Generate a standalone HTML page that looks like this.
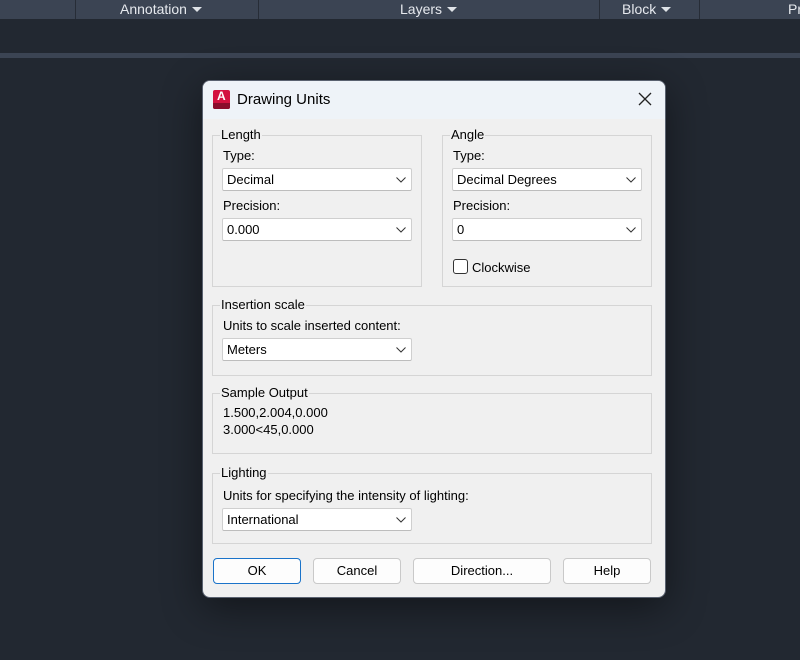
<!DOCTYPE html>
<html><head><style>
*{margin:0;padding:0;box-sizing:border-box}
body{width:800px;height:660px;background:#222831;position:relative;overflow:hidden;font-family:"Liberation Sans",sans-serif;}
.tb{position:absolute;left:0;top:0;width:800px;height:19px;background:#3b4453;}
.sep{position:absolute;top:0;width:1px;height:19px;background:#272d37}
.tt{position:absolute;top:1px;color:#e6e9ee;font-size:14px;}
.tri{display:inline-block;width:0;height:0;border-left:5px solid transparent;border-right:5px solid transparent;border-top:5px solid #dfe3e8;vertical-align:middle;margin-left:5px;margin-top:-2px}
.line{position:absolute;left:0;top:53px;width:800px;height:5px;background:#3b4453}
.dlg{position:absolute;left:202px;top:80px;width:464px;height:518px;background:#f0f0f0;border-radius:8px;border:1px solid #5a6270;overflow:hidden;box-shadow:0 10px 40px rgba(0,0,0,.45)}
.title{position:absolute;left:0;top:0;width:100%;height:38px;background:#eef3f8}
.a{position:absolute;}
.t{position:absolute;font-size:13px;color:#000;white-space:nowrap;line-height:16px}
.g{position:absolute;border:1px solid #d5d5d5}
.lg{position:absolute;background:#f0f0f0;padding:0 1px;font-size:13px;line-height:16px;top:-9px;left:7px}
.cb{position:absolute;width:190px;height:23px;background:#fff;border:1px solid #cfcfcf;border-bottom-color:#bdbdbd;border-radius:2px;font-size:13px;line-height:21px;padding-left:4px}
.cb svg{position:absolute;right:5px;top:8px}
.btn{position:absolute;top:477px;height:26px;background:#fdfdfd;border:1px solid #c9c9c9;border-radius:4px;font-size:13px;line-height:24px;text-align:center}
</style></head><body>
<div class="tb">
<div class="sep" style="left:75px"></div><div class="sep" style="left:258px"></div><div class="sep" style="left:599px"></div><div class="sep" style="left:699px"></div>
<div class="tt" style="left:120px">Annotation<span class="tri"></span></div>
<div class="tt" style="left:400px">Layers<span class="tri"></span></div>
<div class="tt" style="left:622px">Block<span class="tri"></span></div>
<div class="tt" style="left:788px">Pr</div>
</div>
<div class="line"></div>
<div class="dlg">
<div class="title">
<div class="a" style="left:10px;top:9px;width:17px;height:19px;background:#d3113f;border-radius:2px;"><div style="position:absolute;left:0;bottom:0;width:17px;height:6px;background:#8a0c2b;border-radius:0 0 2px 2px"></div><span style="position:absolute;left:4px;top:-1px;color:#fff;font-weight:bold;font-size:12px">A</span></div>
<div class="t" style="left:34px;top:10px;font-size:15px;line-height:18px">Drawing Units</div>
<svg class="a" style="left:435px;top:11px" width="14" height="14"><path d="M1 1L13 13M13 1L1 13" stroke="#222" stroke-width="1.3"/></svg>
</div>
<div class="g" style="left:9px;top:54px;width:210px;height:152px"><div class="lg">Length</div></div>
<div class="g" style="left:239px;top:54px;width:210px;height:152px"><div class="lg">Angle</div></div>
<div class="g" style="left:9px;top:224px;width:440px;height:71px"><div class="lg">Insertion scale</div></div>
<div class="g" style="left:9px;top:312px;width:440px;height:61px"><div class="lg">Sample Output</div></div>
<div class="g" style="left:9px;top:392px;width:440px;height:71px"><div class="lg">Lighting</div></div>

<div class="t" style="left:20px;top:67px">Type:</div>
<div class="cb" style="left:19px;top:87px">Decimal<svg width="10" height="6"><path d="M0.5 .5L5 5L9.5 .5" stroke="#333" fill="none"/></svg></div>
<div class="t" style="left:20px;top:117px">Precision:</div>
<div class="cb" style="left:19px;top:137px">0.000<svg width="10" height="6"><path d="M0.5 .5L5 5L9.5 .5" stroke="#333" fill="none"/></svg></div>

<div class="t" style="left:250px;top:67px">Type:</div>
<div class="cb" style="left:249px;top:87px">Decimal Degrees<svg width="10" height="6"><path d="M0.5 .5L5 5L9.5 .5" stroke="#333" fill="none"/></svg></div>
<div class="t" style="left:250px;top:117px">Precision:</div>
<div class="cb" style="left:249px;top:137px">0<svg width="10" height="6"><path d="M0.5 .5L5 5L9.5 .5" stroke="#333" fill="none"/></svg></div>
<div class="a" style="left:250px;top:178px;width:15px;height:15px;border:1px solid #333;border-radius:3px;background:#fff"></div>
<div class="t" style="left:269px;top:179px">Clockwise</div>

<div class="t" style="left:20px;top:237px">Units to scale inserted content:</div>
<div class="cb" style="left:19px;top:257px">Meters<svg width="10" height="6"><path d="M0.5 .5L5 5L9.5 .5" stroke="#333" fill="none"/></svg></div>

<div class="t" style="left:20px;top:324px">1.500,2.004,0.000</div>
<div class="t" style="left:20px;top:341px">3.000&lt;45,0.000</div>

<div class="t" style="left:20px;top:407px">Units for specifying the intensity of lighting:</div>
<div class="cb" style="left:19px;top:427px">International<svg width="10" height="6"><path d="M0.5 .5L5 5L9.5 .5" stroke="#333" fill="none"/></svg></div>

<div class="btn" style="left:10px;width:88px;border:1px solid #1a73c9">OK</div>
<div class="btn" style="left:110px;width:88px">Cancel</div>
<div class="btn" style="left:210px;width:138px">Direction...</div>
<div class="btn" style="left:360px;width:88px">Help</div>
</div>
</body></html>
